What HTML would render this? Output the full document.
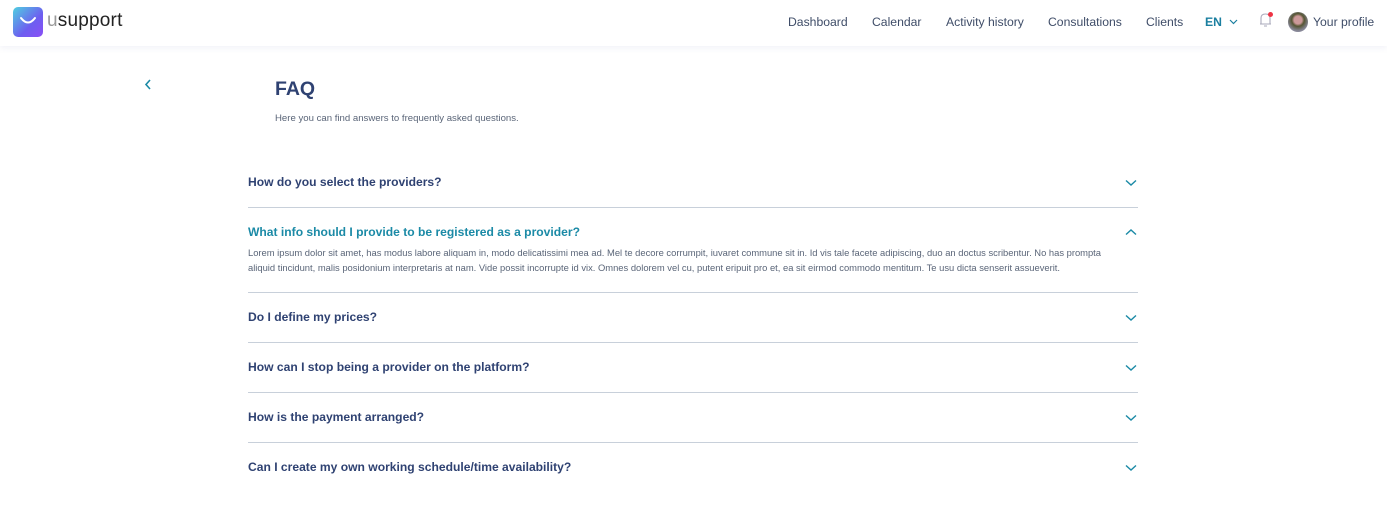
<!DOCTYPE html>
<html><head><style>
*{margin:0;padding:0;box-sizing:border-box}
body{width:1387px;height:526px;background:#fff;font-family:"Liberation Sans",Arial,sans-serif;position:relative;overflow:hidden}
.hdr{position:absolute;left:0;top:0;width:1387px;height:46px;background:#fff;box-shadow:0 2px 6px rgba(80,90,160,0.08)}
.logo{position:absolute;left:13px;top:7px;width:30px;height:30px;border-radius:5px;background:linear-gradient(135deg,#4fd0e0,#6d5ef0 60%,#8a4ff5)}
.brand{position:absolute;left:47px;top:10px;font-size:19px;color:#222;letter-spacing:0.2px}
.brand span{color:#999}
.nav{position:absolute;top:15px;font-size:12.2px;color:#3f4d68}
.q{position:absolute;left:248px;font-size:12.1px;font-weight:bold;color:#2f4272}
.line{position:absolute;left:248px;width:890px;height:1px;background:#c8d0da}
.chev{position:absolute;left:1125px}
.p{position:absolute;left:248px;top:245px;width:880px;font-size:9.4px;line-height:15px;color:#5a6578}
</style></head><body>
<div class="hdr">
<div class="logo"><svg width="30" height="30"><path d="M8 11 Q15 20 22 11" stroke="#fff" stroke-width="2" fill="none" stroke-linecap="round"/></svg></div>
<div class="brand"><span>u</span>support</div>
<div class="nav" style="left:788px">Dashboard</div>
<div class="nav" style="left:872px">Calendar</div>
<div class="nav" style="left:946px">Activity history</div>
<div class="nav" style="left:1048px">Consultations</div>
<div class="nav" style="left:1146px">Clients</div>
<div class="nav" style="left:1205px;font-weight:bold;color:#1b7fa0">EN</div>
<svg style="position:absolute;left:1229px;top:19px" width="9" height="6"><path d="M1 1 L4.5 4.5 L8 1" stroke="#1b7fa0" stroke-width="1.2" fill="none"/></svg>
<svg style="position:absolute;left:1258px;top:11px" width="16" height="18"><path d="M3 13 V7 Q3 3 7.5 3 Q12 3 12 7 V13 Z M2 13 H13 M6 15 H9" stroke="#aab" stroke-width="1.1" fill="none"/><circle cx="12.5" cy="3.5" r="2.5" fill="#ee3344"/></svg>
<div style="position:absolute;left:1288px;top:12px;width:20px;height:20px;border-radius:50%;background:radial-gradient(circle at 50% 40%,#c99 0 25%,#553 40%,#889 70%)"></div>
<div class="nav" style="left:1313px">Your profile</div>
</div>
<svg style="position:absolute;left:143px;top:78px" width="10" height="14"><path d="M7 2 L3 6.5 L7 11" stroke="#1b8aa6" stroke-width="1.6" fill="none"/></svg>
<div style="position:absolute;left:275px;top:78px;font-size:19.5px;font-weight:bold;color:#2f4272">FAQ</div>
<div style="position:absolute;left:275px;top:113px;font-size:9.6px;color:#5a6578">Here you can find answers to frequently asked questions.</div>

<div class="q" style="top:175px">How do you select the providers?</div>
<div class="line" style="top:207px"></div>
<div class="q" style="top:225px;color:#1b8aa6">What info should I provide to be registered as a provider?</div>
<div class="p">Lorem ipsum dolor sit amet, has modus labore aliquam in, modo delicatissimi mea ad. Mel te decore corrumpit, iuvaret commune sit in. Id vis tale facete adipiscing, duo an doctus scribentur. No has prompta aliquid tincidunt, malis posidonium interpretaris at nam. Vide possit incorrupte id vix. Omnes dolorem vel cu, putent eripuit pro et, ea sit eirmod commodo mentitum. Te usu dicta senserit assueverit.</div>
<div class="line" style="top:292px"></div>
<div class="q" style="top:310px">Do I define my prices?</div>
<div class="line" style="top:342px"></div>
<div class="q" style="top:360px">How can I stop being a provider on the platform?</div>
<div class="line" style="top:392px"></div>
<div class="q" style="top:410px">How is the payment arranged?</div>
<div class="line" style="top:442px"></div>
<div class="q" style="top:460px">Can I create my own working schedule/time availability?</div>

<svg class="chev" style="top:179px" width="12" height="8"><path d="M1 1.5 L6 6 L11 1.5" stroke="#1b8aa6" stroke-width="1.4" fill="none"/></svg>
<svg class="chev" style="top:228px" width="12" height="8"><path d="M1 6.5 L6 2 L11 6.5" stroke="#1b8aa6" stroke-width="1.4" fill="none"/></svg>
<svg class="chev" style="top:314px" width="12" height="8"><path d="M1 1.5 L6 6 L11 1.5" stroke="#1b8aa6" stroke-width="1.4" fill="none"/></svg>
<svg class="chev" style="top:364px" width="12" height="8"><path d="M1 1.5 L6 6 L11 1.5" stroke="#1b8aa6" stroke-width="1.4" fill="none"/></svg>
<svg class="chev" style="top:414px" width="12" height="8"><path d="M1 1.5 L6 6 L11 1.5" stroke="#1b8aa6" stroke-width="1.4" fill="none"/></svg>
<svg class="chev" style="top:464px" width="12" height="8"><path d="M1 1.5 L6 6 L11 1.5" stroke="#1b8aa6" stroke-width="1.4" fill="none"/></svg>
</body></html>
